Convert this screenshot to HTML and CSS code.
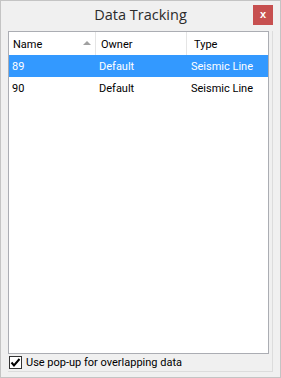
FILE: index.html
```html
<!DOCTYPE html>
<html>
<head>
<meta charset="utf-8">
<link rel="stylesheet" href="styles.css">
</head>
<body>
<div class="window">
  <div class="titlebar">
    <div class="title">Data Tracking</div>
    <div class="close">x</div>
  </div>
  <div class="panel">
    <div class="list">
      <div class="row header">
        <div class="cell c1">Name<span class="sort"></span></div>
        <div class="cell c2">Owner</div>
        <div class="cell c3">Type</div>
      </div>
      <div class="row selected">
        <div class="cell c1">89</div>
        <div class="cell c2">Default</div>
        <div class="cell c3">Seismic Line</div>
      </div>
      <div class="row">
        <div class="cell c1">90</div>
        <div class="cell c2">Default</div>
        <div class="cell c3">Seismic Line</div>
      </div>
    </div>
    <label class="check">
      <span class="box"><svg width="11" height="11" viewBox="0 0 11 11"><path d="M1.5 5.5 L4 8.5 L9.5 2" fill="none" stroke="#000" stroke-width="2"/></svg></span>
      <span class="label">Use pop-up for overlapping data</span>
    </label>
  </div>
</div>
</body>
</html>
```

FILE: styles.css
```css
html, body {
  margin: 0;
  padding: 0;
  background: #f0f0f0;
}
body {
  font-family: "Open Sans", "Noto Sans", "Liberation Sans", sans-serif;
}
.window {
  width: 281px;
  height: 378px;
  box-sizing: border-box;
  border: 1px solid #c4c4c4;
  background: #f0f0f0;
  display: flex;
  flex-direction: column;
}
.titlebar {
  height: 30px;
  position: relative;
  display: flex;
  justify-content: center;
  align-items: center;
}
.title {
  font-size: 14.5px;
  color: #2b2b2b;
  margin-top: -4px;
  font-family: "Open Sans", "Noto Sans", sans-serif;
}
.close {
  position: absolute;
  right: 7px;
  top: 4px;
  width: 20px;
  height: 20px;
  background: #c75050;
  color: #fff;
  font-size: 11px;
  font-weight: bold;
  line-height: 18px;
  text-align: center;
  font-family: "Liberation Sans", sans-serif;
}
.panel {
  margin: 0 7px 5px 7px;
  border-right: 1px solid #dcdcdc;
  border-bottom: 1px solid #dcdcdc;
  flex: 1;
  display: flex;
  flex-direction: column;
}
.list {
  flex: 1;
  background: #fff;
  border: 1px solid #abadb3;
  margin-right: 3px;
  font-family: Roboto, "Liberation Sans", sans-serif;
  font-size: 11px;
}
.row {
  display: flex;
  height: 22px;
  align-items: center;
  color: #000;
}
.row.header {
  height: 23px;
}
.row.selected {
  background: #3399ff;
  color: #fff;
}
.cell {
  box-sizing: border-box;
  height: 100%;
  display: flex;
  align-items: center;
}
.c1 { width: 87px; padding-left: 3px; position: relative; }
.c2 { width: 91px; padding-left: 3px; }
.c3 { flex: 1; padding-left: 4px; }
.header .cell { border-right: 1px solid #e5e5e5; padding-left: 5px; padding-top: 1px; }
.header .c1 { padding-left: 4px; }
.header .c3 { border-right: none; padding-left: 7px; }
.sort {
  position: absolute;
  right: 4px;
  top: 9px;
  width: 0;
  height: 0;
  border-left: 4px solid transparent;
  border-right: 4px solid transparent;
  border-bottom: 4px solid #a0a0a0;
}
.check {
  display: flex;
  align-items: center;
  height: 17px;
  padding-left: 1px;
  font-family: Roboto, "Liberation Sans", sans-serif;
  font-size: 11px;
  color: #000;
}
.box {
  width: 11px;
  height: 11px;
  border: 1px solid #333;
  background: #fff;
  display: flex;
  margin-right: 4px;
}
```
